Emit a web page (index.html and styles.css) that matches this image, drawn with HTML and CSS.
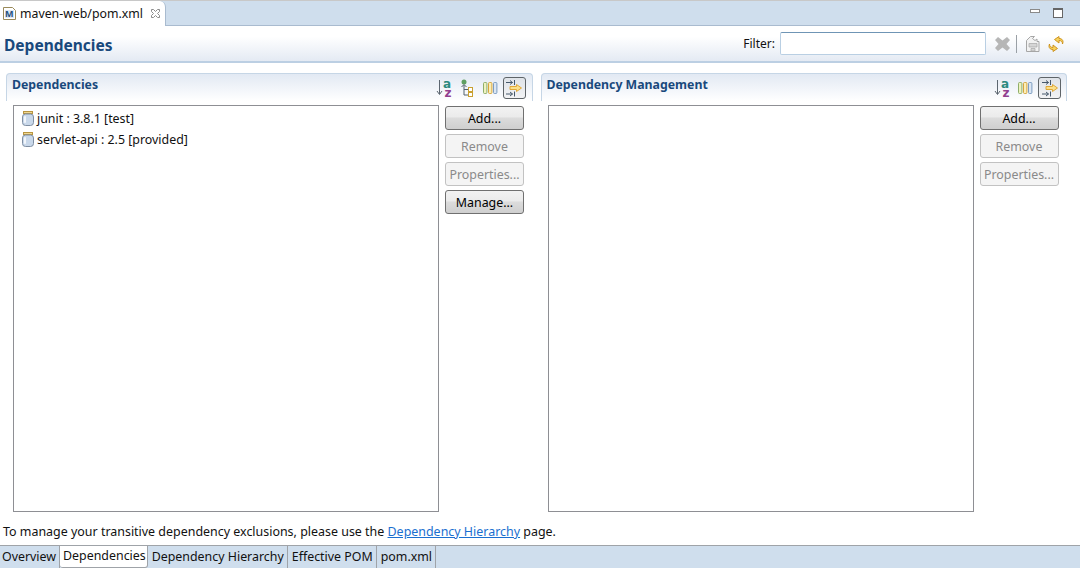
FILE: index.html
```html
<!DOCTYPE html>
<html lang="en">
<head>
<meta charset="utf-8">
<title>maven-web/pom.xml</title>
<link rel="stylesheet" href="styles.css">
</head>
<body>
<svg class="defs" width="0" height="0" aria-hidden="true">
  <defs>
    <symbol id="i-sort" viewBox="0 0 18 19">
      <path d="M3.500 2v14M1 13l2.500 3.500L6 13" fill="none" stroke="#5c6670" stroke-width="1"/>
      <text class="glyph-a" x="7" y="10">a</text>
      <text class="glyph-z" x="8.500" y="18.500">z</text>
    </symbol>
    <symbol id="i-tree" viewBox="0 0 14 18">
      <circle cx="4" cy="3" r="2.500" fill="#5f9f62"/>
      <path d="M4 6v10h4M4 10.500h4M1.500 8L4 5.500 6.500 8" fill="none" stroke="#55626e"/>
      <rect x="8.500" y="8.500" width="4" height="4" fill="#fff" stroke="#c9a030"/>
      <rect x="8.500" y="13.500" width="4" height="4" fill="#fff" stroke="#c9a030"/>
    </symbol>
    <symbol id="i-cols" viewBox="0 0 15 12">
      <rect x=".5" y=".5" width="3.400" height="11" rx="1" fill="#eef2c0" stroke="#8fae6a"/>
      <rect x="5.500" y=".5" width="3.400" height="11" rx="1" fill="#fbeeb8" stroke="#d6a63c"/>
      <rect x="10.500" y=".5" width="3.400" height="11" rx="1" fill="#dbe6f3" stroke="#7c9cc0"/>
    </symbol>
    <symbol id="i-link" viewBox="0 0 18 18">
      <path d="M1 3.500h6.500M5 1.500l2.500 2-2.500 2M9.500 1v5" fill="none" stroke="#46596c"/>
      <path d="M1 15h6.500M5 13l2.500 2-2.500 2M9.500 12.500v5" fill="none" stroke="#46596c"/>
      <path d="M5 7.500h6.500V5.500L16.500 9l-5 3.500v-2H5z" fill="#fbe08a" stroke="#dca02a" stroke-width=".9"/>
    </symbol>
    <symbol id="i-jar" viewBox="0 0 12 15">
      <rect x="1.500" y="0.500" width="9" height="2" fill="#f0d890" stroke="#b89440"/>
      <rect x=".5" y="3" width="11" height="11.500" rx="3" fill="#c9d8ea" stroke="#7f8ea2"/>
      <rect x="2" y="5" width="2" height="7" rx="1" fill="#f2f6fb"/>
    </symbol>
  </defs>
</svg>

<div class="editor-tabs">
  <div class="editor-tab">
    <svg class="tab-icon" viewBox="0 0 13 13" width="13" height="13" aria-hidden="true">
      <path d="M.5.500h9l3 3v9H.500z" fill="#fff" stroke="#9a8a5a"/>
      <rect x="2" y="3" width="9" height="8" fill="#dfe8f4"/>
    </svg>
    <span class="tab-m">M</span>
    <span class="tab-title">maven-web/pom.xml</span>
    <svg class="tab-close" viewBox="0 0 11 11" width="11" height="11" aria-hidden="true">
      <path d="M1.500 1.500h2l2 2 2-2h2v2l-2 2 2 2v2h-2l-2-2-2 2h-2v-2l2-2-2-2z" fill="#fff" stroke="#8b8b8b"/>
    </svg>
  </div>
  <div class="window-controls">
    <span class="ctl-min"></span>
    <span class="ctl-max"></span>
  </div>
</div>

<header class="form-head">
  <h1 class="form-title">Dependencies</h1>
  <div class="filter">
    <label class="filter-label" for="filter">Filter:</label>
    <input class="filter-input" id="filter" type="text">
    <svg class="tool-x" viewBox="0 0 15 14" width="15" height="14" aria-hidden="true">
      <path d="M0 3l3-3 4.500 3.500L12 0l3 3-3.500 4 3.500 4-3 3-4.500-3.500L3 14l-3-3 3.500-4z" fill="#b6b6b6"/>
    </svg>
    <span class="tool-sep"></span>
    <svg class="tool-save" viewBox="0 0 14 16" width="14" height="16" aria-hidden="true">
      <path d="M.500 4.500l4-4h4l-2 2 2.500 2 2-1.500v2.500h2v10h-12.500z" fill="#f2f2f2" stroke="#a6a6a6"/>
      <path d="M3 7.500h8v3.500h-8zM5 12.500h4v2.500h-4z" fill="#d6d6d6" stroke="#a6a6a6" stroke-width=".7"/>
    </svg>
    <svg class="tool-sync" viewBox="0 0 16 16" width="16" height="16" aria-hidden="true">
      <path d="M14.500 8C14.500 5.500 13 4.500 11 4.500V7L6.500 3.500 11 .5v2c3 0 5 2 3.500 5.500z" fill="#f7d25e" stroke="#c98c14" stroke-width=".9"/>
      <path d="M1.500 8C1.500 10.500 3 11.500 5 11.500V9l4.500 3.500L5 15.500v-2c-3 0-5-2-3.500-5.500z" fill="#f7d25e" stroke="#c98c14" stroke-width=".9"/>
    </svg>
  </div>
</header>

<main class="sections">
  <section class="section">
    <div class="section-head">
      <h2 class="section-title">Dependencies</h2>
      <div class="section-tools">
        <svg class="ic ic-sort"><use href="#i-sort"/></svg>
        <svg class="ic ic-tree"><use href="#i-tree"/></svg>
        <svg class="ic ic-cols"><use href="#i-cols"/></svg>
        <span class="toggle"><svg class="ic ic-link"><use href="#i-link"/></svg></span>
      </div>
    </div>
    <div class="section-body">
      <ul class="tree">
        <li class="tree-row"><svg class="ic-jar"><use href="#i-jar"/></svg>junit : 3.8.1 [test]</li>
        <li class="tree-row"><svg class="ic-jar"><use href="#i-jar"/></svg>servlet-api : 2.5 [provided]</li>
      </ul>
      <div class="buttons">
        <button class="btn">Add...</button>
        <button class="btn" disabled>Remove</button>
        <button class="btn" disabled>Properties...</button>
        <button class="btn">Manage...</button>
      </div>
    </div>
  </section>

  <section class="section">
    <div class="section-head">
      <h2 class="section-title">Dependency Management</h2>
      <div class="section-tools section-tools-right">
        <svg class="ic ic-sort"><use href="#i-sort"/></svg>
        <svg class="ic ic-cols"><use href="#i-cols"/></svg>
        <span class="toggle"><svg class="ic ic-link"><use href="#i-link"/></svg></span>
      </div>
    </div>
    <div class="section-body">
      <ul class="tree"></ul>
      <div class="buttons">
        <button class="btn">Add...</button>
        <button class="btn" disabled>Remove</button>
        <button class="btn" disabled>Properties...</button>
      </div>
    </div>
  </section>
</main>

<p class="note">To manage your transitive dependency exclusions, please use the <a class="note-link" href="#">Dependency Hierarchy</a> page.</p>

<nav class="page-tabs">
  <span class="page-tab page-tab-overview">Overview</span>
  <span class="page-tab page-tab-active">Dependencies</span>
  <span class="page-tab">Dependency Hierarchy</span>
  <span class="page-tab">Effective POM</span>
  <span class="page-tab">pom.xml</span>
</nav>
</body>
</html>
```
FILE: styles.css
```css
* { box-sizing: border-box; }
html, body { height: 100%; }
body {
  margin: 0;
  width: 1080px;
  height: 570px;
  overflow: hidden;
  display: flex;
  flex-direction: column;
  background: #fff;
  color: #111;
  font-family: "Noto Sans", "Open Sans", sans-serif;
  font-size: 12.400px;
}
.defs { position: absolute; }
.glyph-a, .glyph-z { font-family: "DejaVu Sans", sans-serif; font-weight: 700; font-size: 12px; }
.glyph-a { fill: #2c8a7e; }
.glyph-z { fill: #92408f; }

.editor-tabs {
  height: 26px;
  flex: none;
  display: flex;
  justify-content: space-between;
  background: #cfdeed;
  border-top: 1px solid #c8c8c8;
  border-bottom: 1px solid #a9bbcf;
}
.editor-tab {
  width: 166px;
  height: 25px;
  background: #fff;
  border-right: 1px solid #a9bbcf;
  border-top-right-radius: 6px;
  display: flex;
  align-items: center;
  padding-left: 3px;
  position: relative;
}
.tab-icon { flex: none; }
.tab-m {
  position: absolute;
  left: 5px;
  top: 7px;
  font-size: 9px;
  line-height: 11px;
  font-weight: 700;
  color: #24507f;
}
.tab-title { margin-left: 4px; font-size: 12.300px; color: #111; white-space: nowrap; }
.tab-close { margin-left: 7px; flex: none; }
.window-controls {
  display: flex;
  align-items: flex-start;
  gap: 13px;
  padding: 7px 17px 0 0;
}
.ctl-min {
  width: 10px;
  height: 4px;
  margin-top: 1px;
  background: #fff;
  border: 1px solid #8a8a8a;
}
.ctl-max {
  width: 10px;
  height: 10px;
  background: #fff;
  border: 1px solid #666;
  border-top-width: 2px;
}

.form-head {
  height: 37px;
  flex: none;
  display: flex;
  align-items: center;
  justify-content: space-between;
  padding: 0 16px 0 4px;
  background: linear-gradient(#fff 0%, #fff 30%, #e4eaf3 100%);
  border-bottom: 2px solid #bccfe3;
}
.form-title {
  margin: 2px 0 0;
  font-size: 15.500px;
  font-weight: 700;
  color: #19497c;
}
.filter { display: flex; align-items: center; }
.filter-label { font-size: 12px; margin-right: 5px; }
.filter-input {
  width: 206px;
  height: 23px;
  padding: 0;
  background: #fff;
  border: 1px solid #b9cfe3;
  border-top-color: #6f95b5;
  border-radius: 2px;
}
.tool-x { margin-left: 9px; }
.tool-sep { width: 1px; height: 18px; background: #9aa0a6; margin: 0 9px 0 6px; }
.tool-save { margin-right: 8px; }

.sections {
  flex: 1;
  min-height: 0;
  display: flex;
  gap: 8px;
  padding: 10px 13px 0 6px;
}
.section { flex: 1; display: flex; flex-direction: column; min-width: 0; }
.section-head {
  height: 28px;
  flex: none;
  display: flex;
  align-items: center;
  justify-content: space-between;
  padding: 0 6px 0 5px;
  background: linear-gradient(#e2e9f3, #fff);
  border: 1px solid #c6d6e6;
  border-bottom: 0;
  border-radius: 4px 4px 0 0;
}
.section-title {
  margin: 0 0 6px;
  font-size: 12.300px;
  font-weight: 700;
  color: #19497c;
}
.section-tools { display: flex; align-items: center; }
.section-tools-right { margin-right: -1px; }
.ic { display: block; flex: none; }
.ic-sort { width: 18px; height: 19px; }
.ic-tree { width: 14px; height: 18px; margin-left: 6px; }
.ic-cols { width: 15px; height: 12px; margin-left: 9px; }
.section-tools-right .ic-cols { margin-left: 6px; }
.toggle {
  width: 23px;
  height: 22px;
  margin-left: 5px;
  display: flex;
  align-items: center;
  justify-content: center;
  background: linear-gradient(#dfe3e8, #f2f3f5);
  border: 1px solid #5e6468;
  border-radius: 3px;
}
.ic-link { width: 18px; height: 18px; }

.section-body {
  flex: 1;
  display: flex;
  gap: 6px;
  padding: 4px 9px 0 7px;
  min-height: 0;
}
.tree {
  width: 426px;
  height: 407px;
  flex: none;
  margin: 0;
  padding: 2px 0 0 8px;
  list-style: none;
  background: #fff;
  border: 1px solid #8e8f94;
}
.tree-row {
  height: 21px;
  display: flex;
  align-items: center;
  gap: 3px;
}
.ic-jar { width: 12px; height: 15px; flex: none; }
.buttons { width: 79px; flex: none; display: flex; flex-direction: column; gap: 4px; padding-top: 1px; }
.btn {
  height: 24px;
  padding: 0;
  font: inherit;
  color: #000;
  background: linear-gradient(#f2f2f2 0%, #ebebeb 45%, #dcdcdc 50%, #cfcfcf 100%);
  border: 1px solid #707070;
  border-radius: 3px;
}
.btn:disabled {
  color: #8a8a8a;
  background: #f4f4f4;
  border-color: #c2c2c2;
}

.note {
  flex: none;
  height: 33px;
  margin: 0;
  padding: 11px 0 0 3px;
  line-height: 18px;
  font-size: 12.450px;
}
.note-link { color: #1a6fd0; text-decoration: underline; }

.page-tabs {
  height: 23px;
  flex: none;
  display: flex;
  margin-bottom: 2px;
  background: #cfdeed;
  border-top: 1px solid #9fa3a8;
}
.page-tab {
  height: 22px;
  padding: 0 3px 2px 4px;
  display: flex;
  align-items: center;
  white-space: nowrap;
  border-right: 1px solid #9fa3a8;
}
.page-tab-overview { padding: 0 3px 2px 2px; }
.page-tab-active {
  background: #fff;
  height: 23px;
  margin-top: -1px;
  padding: 0 1px 2px 3px;
  border: 1px solid #9fa3a8;
  border-left: 0;
  border-radius: 0 0 3px 3px;
}
```
